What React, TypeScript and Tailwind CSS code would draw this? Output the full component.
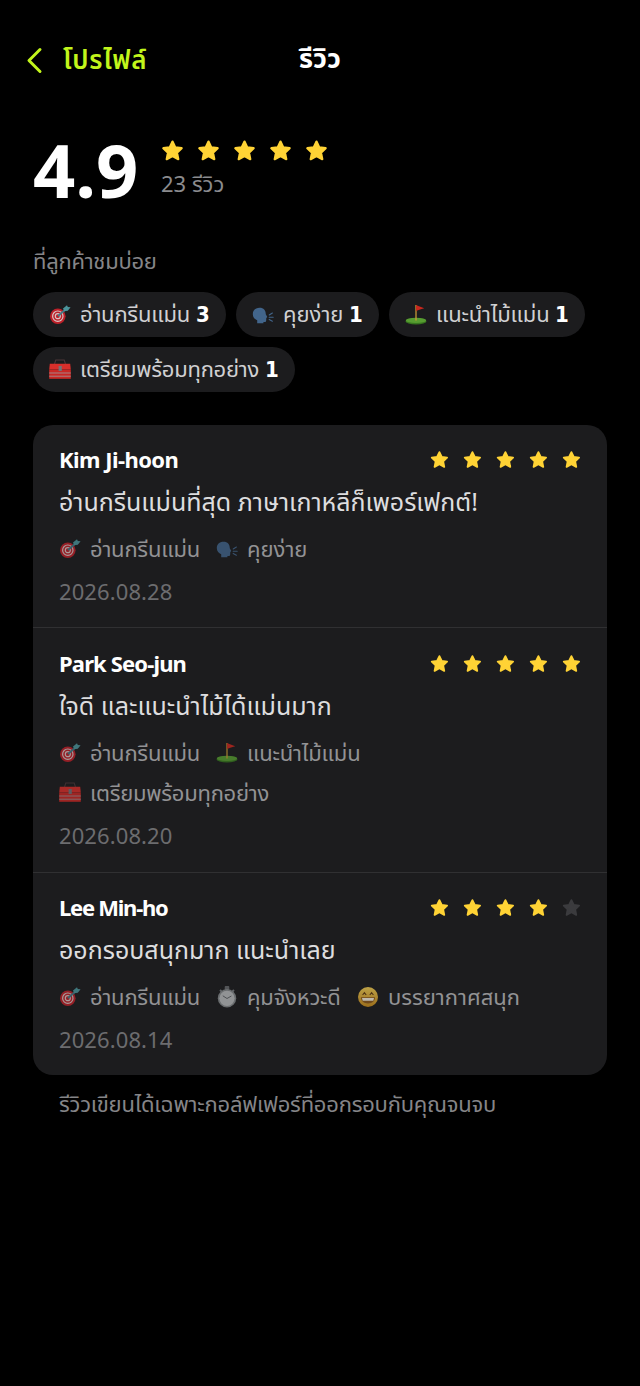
import type { ReactNode } from "react";

type TagKey = "green" | "talk" | "club" | "ready" | "timing" | "fun";

interface Review {
  name: string;
  nameClass: string;
  stars: number;
  text: string;
  tags: TagKey[];
  date: string;
  rowClass: string;
}

const TAGS: Record<TagKey, { label: string; labelClass: string; icon: ReactNode }> = {
  green: { label: "อ่านกรีนแม่น", labelClass: "w-[109px] tracking-[-0.22px]", icon: <DartIcon /> },
  talk: { label: "คุยง่าย", labelClass: "w-[59px]", icon: <TalkIcon /> },
  club: { label: "แนะนำไม้แม่น", labelClass: "w-[112px] tracking-[-0.22px]", icon: <FlagIcon /> },
  ready: { label: "เตรียมพร้อมทุกอย่าง", labelClass: "w-[178px] tracking-[-0.25px]", icon: <ToolboxIcon /> },
  timing: { label: "คุมจังหวะดี", labelClass: "w-[93px] tracking-[-0.2px]", icon: <WatchIcon /> },
  fun: { label: "บรรยากาศสนุก", labelClass: "w-[132px]", icon: <GrinIcon /> },
};

const TOP_TAGS: { key: TagKey; count: number }[] = [
  { key: "green", count: 3 },
  { key: "talk", count: 1 },
  { key: "club", count: 1 },
  { key: "ready", count: 1 },
];

const REVIEWS: Review[] = [
  {
    name: "Kim Ji-hoon",
    nameClass: "tracking-[-0.55px]",
    stars: 5,
    text: "อ่านกรีนแม่นที่สุด ภาษาเกาหลีก็เพอร์เฟกต์!",
    tags: ["green", "talk"],
    date: "2026.08.28",
    rowClass: "h-[202px] pt-[19px]",
  },
  {
    name: "Park Seo-jun",
    nameClass: "tracking-[-0.85px]",
    stars: 5,
    text: "ใจดี และแนะนำไม้ได้แม่นมาก",
    tags: ["green", "club", "ready"],
    date: "2026.08.20",
    rowClass: "h-[245px] border-t border-[#303032] pt-5",
  },
  {
    name: "Lee Min-ho",
    nameClass: "tracking-[-1.25px]",
    stars: 4,
    text: "ออกรอบสนุกมาก แนะนำเลย",
    tags: ["green", "timing", "fun"],
    date: "2026.08.14",
    rowClass: "h-[203px] border-t border-[#303032] pt-[19px]",
  },
];

function DartIcon() {
  return (
    <svg viewBox="0 0 22 22" className="size-[22px] shrink-0">
      <circle cx="8.8" cy="12.2" r="7.8" fill="#bd2029" />
      <circle cx="8.8" cy="12.2" r="5.2" fill="none" stroke="#d9c3c3" strokeWidth="1.2" />
      <circle cx="8.8" cy="12.2" r="2.5" fill="none" stroke="#d9c3c3" strokeWidth="1.2" />
      <path d="M9 12L16.5 5.5" stroke="#417985" strokeWidth="1.7" />
      <path d="M14 4.6L18 1.2L18.8 3L21.6 3.2L18.8 6.8L15.2 7.3Z" fill="#4b949b" />
    </svg>
  );
}

function TalkIcon() {
  return (
    <svg viewBox="0 0 22 22" className="size-[22px] shrink-0">
      <path
        d="M7.6 3.7C3.3 3.7 .8 6.4 .8 10C.8 13.3 2.8 15.3 5.2 16.2V19.2H11.4V18C13.4 18.3 14.2 17.8 14.2 16.2L14.3 14L15.3 13L13.8 10.2C13.7 6.3 11.7 3.7 7.6 3.7Z"
        fill="#42658b"
      />
      <path d="M17.2 11L20.4 9M17.2 13.2H21.2M17.2 15.4L20.4 17.2" stroke="#42658b" strokeWidth="1.1" strokeLinecap="round" />
    </svg>
  );
}

function FlagIcon() {
  return (
    <svg viewBox="0 0 22 22" className="size-[22px] shrink-0">
      <ellipse cx="11" cy="17.2" rx="10.5" ry="3.2" fill="#37761f" />
      <ellipse cx="11" cy="16.4" rx="10.2" ry="2.7" fill="#579d31" />
      <path d="M11 1V16.5" stroke="#c79a35" strokeWidth="1.3" />
      <path d="M11 1L14 2.2L19.3 4.2L15 5.5L11 7Z" fill="#c8281e" />
    </svg>
  );
}

function ToolboxIcon() {
  return (
    <svg viewBox="0 0 22 22" className="size-[22px] shrink-0">
      <path d="M5.5 5L6.8 1H15.2L16.5 5" fill="none" stroke="#4c3638" strokeWidth="1.1" />
      <path d="M.8 4.7H21.2L21.8 10.5H.2Z" fill="#d82f2b" />
      <rect x=".2" y="10.5" width="21.6" height="9.3" fill="#c92825" />
      <path d="M.2 14H21.8M.2 17.2H21.8" stroke="#a08f92" strokeWidth=".9" />
      <rect x="9.6" y="7" width="3.2" height="5" fill="#757176" />
    </svg>
  );
}

function WatchIcon() {
  return (
    <svg viewBox="0 0 22 22" className="size-[22px] shrink-0">
      <rect x="8.7" y="0" width="4.6" height="4" rx="1" fill="#66696c" />
      <path d="M4 4L6.5 6.2M18 4L15.5 6.2" stroke="#777b7e" strokeWidth="2" />
      <circle cx="11" cy="12.3" r="9.2" fill="#84888b" />
      <circle cx="11" cy="12.3" r="7.6" fill="#b9bbbd" />
      <path d="M6.8 9.8L11 12.5L15.4 10" fill="none" stroke="#606468" strokeWidth="1" />
    </svg>
  );
}

function GrinIcon() {
  return (
    <svg viewBox="0 0 22 22" className="size-[22px] shrink-0">
      <defs>
        <linearGradient id="grin" x1="0" y1="0" x2="0" y2="1">
          <stop offset="0" stopColor="#f3cf55" />
          <stop offset="1" stopColor="#c78a1b" />
        </linearGradient>
      </defs>
      <circle cx="11" cy="11" r="10" fill="url(#grin)" />
      <path d="M5.6 9L7.4 6.7L9.2 9M12.8 9L14.6 6.7L16.4 9" fill="none" stroke="#5e3b12" strokeWidth="1.1" />
      <path d="M4 11.3H18C18 15.2 15.2 17.5 11 17.5S4 15.2 4 11.3Z" fill="#8c5a1c" />
      <path d="M5 12H17L16.3 14.7H5.7Z" fill="#f5eedf" />
    </svg>
  );
}

function Star({ on = true, className }: { on?: boolean; className: string }) {
  return (
    <svg viewBox="0 0 24 24" className={className}>
      <path
        d="M12.5 2.6L15.3 8.4L21.7 9.2L17 13.7L18.3 20.2L12.5 17.1L6.7 20.2L8 13.7L3.3 9.2L9.7 8.4Z"
        fill={on ? "#ffd335" : "#3b3b3e"}
        stroke={on ? "#ffd335" : "#3b3b3e"}
        strokeWidth="2.2"
        strokeLinejoin="round"
      />
    </svg>
  );
}

function ReviewRow({ review }: { review: Review }) {
  return (
    <article className={`flex flex-col px-[26px] ${review.rowClass}`}>
      <div className="flex h-[30px] items-center justify-between">
        <h2 className={`text-[22px] leading-[30px] font-bold text-white ${review.nameClass}`}>{review.name}</h2>
        <div className="flex gap-[13px] pt-0.5">
          {[1, 2, 3, 4, 5].map((n) => (
            <Star key={n} on={n <= review.stars} className="size-5" />
          ))}
        </div>
      </div>
      <p className="mt-[9px] h-[37px] text-[25px] leading-[37px] whitespace-nowrap text-[#dddddf]">{review.text}</p>
      <div className="mt-[13px] flex flex-wrap gap-x-[17px] gap-y-2.5">
        {review.tags.map((key) => (
          <span key={key} className="flex h-[30px] items-center gap-[9px] text-[22px] leading-[30px] text-[#929294]">
            <span className="pt-0.5 opacity-75">{TAGS[key].icon}</span>
            <span className={`whitespace-nowrap ${TAGS[key].labelClass}`}>{TAGS[key].label}</span>
          </span>
        ))}
      </div>
      <time className="mt-[13px] text-[22px] leading-[30px] tracking-[0.1px] text-[#6c6c6f]">{review.date}</time>
    </article>
  );
}

export default function App() {
  return (
    <main className="flex h-[1386px] w-[640px] flex-col bg-black px-[33px] font-['Noto_Sans','Noto_Sans_Thai',sans-serif]">
      <header className="mt-10 grid h-9 grid-cols-3 items-center">
        <button className="-ml-[7px] flex items-center gap-5 text-[#c2f51b]">
          <svg viewBox="0 0 17 28" className="h-7 w-[17px]">
            <path d="M14 3.5L3 14.5L14 25.5" fill="none" stroke="currentColor" strokeWidth="3" strokeLinecap="round" strokeLinejoin="round" />
          </svg>
          <span className="pb-0.5 text-[26px] leading-9 font-semibold tracking-[0.8px] whitespace-nowrap">โปรไฟล์</span>
        </button>
        <h1 className="pb-[3px] text-center text-[27px] leading-9 font-bold text-white">รีวิว</h1>
      </header>

      <section className="mt-[55px] flex h-[79px] gap-[22px]">
        <div className="w-[106px] text-[74px] leading-[78px] font-bold text-white">4.9</div>
        <div className="flex flex-col pt-2">
          <div className="-ml-px flex gap-3">
            {[1, 2, 3, 4, 5].map((n) => (
              <Star key={n} className="size-6" />
            ))}
          </div>
          <p className="mt-[5px] text-[22px] leading-[30px] text-[#8b8b8e]">23 รีวิว</p>
        </div>
      </section>

      <h2 className="mt-[35px] text-[22px] leading-[30px] tracking-[-0.25px] text-[#858588]">ที่ลูกค้าชมบ่อย</h2>
      <div className="mt-[17px] flex flex-wrap gap-2.5">
        {TOP_TAGS.map(({ key, count }) => (
          <span key={key} className="flex h-[45px] items-center rounded-full bg-[#1c1c1e] px-4 text-[22px] text-[#d0d0d2]">
            {TAGS[key].icon}
            <span className={`ml-[9px] pb-0.5 whitespace-nowrap ${TAGS[key].labelClass}`}>{TAGS[key].label}</span>
            <b className="ml-[7px] w-[14px] pb-px font-['DejaVu_Sans_Condensed','DejaVu_Sans'] text-[22px] font-bold text-white">
              {count}
            </b>
          </span>
        ))}
      </div>

      <section className="mt-[33px] rounded-[20px] bg-[#1c1c1e]">
        {REVIEWS.map((r) => (
          <ReviewRow key={r.name} review={r} />
        ))}
      </section>
      <p className="mt-[13px] px-[26px] text-[22px] leading-[30px] tracking-[-0.21px] whitespace-nowrap text-[#858588]">
        รีวิวเขียนได้เฉพาะกอล์ฟเฟอร์ที่ออกรอบกับคุณจนจบ
      </p>
    </main>
  );
}
